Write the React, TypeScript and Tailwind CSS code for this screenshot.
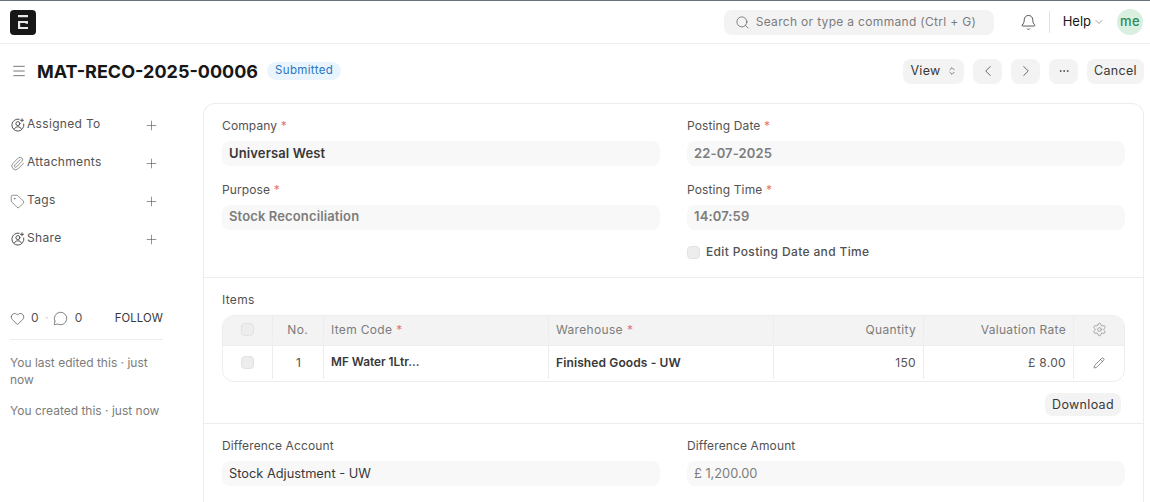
import { Bell, ChevronDown, ChevronLeft, ChevronRight, ChevronsUpDown, Ellipsis, Heart, MessageCircle, Paperclip, Pencil, Plus, Search, Settings, Tag, Menu } from "lucide-react";

function UserPlusIcon() {
  return (
    <svg width="14" height="14" viewBox="0 0 14 14" fill="none" stroke="#525252" strokeWidth="1" strokeLinecap="round" className="shrink-0">
      <path d="M8.2 1.2A6 6 0 1 0 12.8 6" />
      <circle cx="6.9" cy="5.6" r="2" />
      <path d="M3.4 11c.6-1.5 2-2.2 3.5-2.2s2.900.7 3.500 2.200" />
      <path d="M11 .8v3M9.500 2.300h3" />
    </svg>
  );
}

function Field({ label, value, required, bold, muted, tight }: { label: string; value: string; required?: boolean; bold?: boolean; muted?: boolean; tight?: boolean }) {
  return (
    <div className="flex flex-col">
      <div className="h-[15px] text-[12px] leading-[13px] tracking-[0.01em] text-[#525252]">
        {label} {required && <span className="text-[#e57373]">*</span>}
      </div>
      <div
        className={`mt-[7px] h-[25px] rounded-lg bg-[#f8f8f8] px-[7px] ${tight ? "leading-[22px]" : "leading-[24px]"} ${bold ? "text-[13px] font-semibold tracking-[0.01em]" : "text-[12.8px] leading-[25px] tracking-normal"} ${muted ? "text-[#7c7c7c]" : "text-[#383838]"}`}
      >
        {value}
      </div>
    </div>
  );
}

function SideItem({ icon, label }: { icon: React.ReactNode; label: string }) {
  return (
    <div className="flex h-[38px] items-center">
      <div className="flex w-[20px] justify-center pl-[2px] pr-[1px]">{icon}</div>
      <span className="-translate-y-px text-[12px] text-[#525252]">{label}</span>
      <Plus size={15} strokeWidth={1} color="#525252" className="ml-auto mr-[4px]" />
    </div>
  );
}

function Checkbox() {
  return <div className="h-[13px] w-[13px] rounded-[4px] border border-[#e2e2e2] bg-[#ededed]" />;
}

export default function App() {
  return (
    <div className="h-[502px] w-[1150px] overflow-hidden bg-white font-['Inter',sans-serif] tracking-[0.02em] text-[#383838]">
      <div className="flex h-[44px] items-center border-t border-b border-t-[#66757d] border-b-[#ededed] pl-[10px] pr-[7px]">
        <div className="flex h-[25px] w-[26px] items-center justify-center rounded-[4px] bg-[#171717]">
          <svg width="10" height="14" viewBox="0 0 10 14" fill="#e8e8e8">
            <path d="M0 0h10v2.200H0zM0 6h10v2.800H7.500V8H2.200v4H10v2H0z" />
          </svg>
        </div>
        <div className="ml-[688px] flex h-[25px] w-[270px] shrink-0 items-center rounded-lg bg-[#f3f3f3] pl-[11px] text-[12px] text-[#7c7c7c]">
          <Search size={15} strokeWidth={1.1} color="#525252" />
          <span className="ml-[6px]">Search or type a command (Ctrl + G)</span>
        </div>
        <Bell size={17} strokeWidth={1} color="#171717" className="ml-[26px] shrink-0" />
        <div className="ml-[12px] h-[22px] w-px bg-[#e2e2e2]" />
        <span className="ml-[13px] text-[13px] tracking-normal text-[#171717]">Help</span>
        <ChevronDown size={12} strokeWidth={1.1} color="#525252" className="ml-[2px] shrink-0" />
        <div className="ml-[12px] flex h-[26px] w-[26px] shrink-0 items-center justify-center rounded-full bg-[#d9efdf] text-[13px] font-medium text-[#2b8a57]">me</div>
      </div>

      <div className="flex h-[59px] items-center pb-[5px] pl-[11px] pr-[6px]">
        <Menu size={16} strokeWidth={1} color="#383838" />
        <h1 className="ml-[10px] text-[18px] font-bold tracking-normal text-[#171717]">MAT-RECO-2025-00006</h1>
        <span className="ml-[9px] flex h-[18px] w-[74px] items-center justify-center rounded-full bg-[#e9f4fd] text-[11.5px] tracking-[0.03em] text-[#2a75c4]">Submitted</span>
        <div className="ml-auto flex h-[25px] gap-[9px] text-[12.5px] text-[#383838]">
          <button className="flex w-[61px] items-center justify-center gap-[6px] rounded-lg bg-[#f3f3f3]">
            View <ChevronsUpDown size={10} strokeWidth={1.5} />
          </button>
          <button className="flex w-[29px] items-center justify-center rounded-lg bg-[#f3f3f3]">
            <ChevronLeft size={18} strokeWidth={1} />
          </button>
          <button className="flex w-[29px] items-center justify-center rounded-lg bg-[#f3f3f3]">
            <ChevronRight size={18} strokeWidth={1} />
          </button>
          <button className="flex w-[29px] items-center justify-center rounded-lg bg-[#f3f3f3]">
            <Ellipsis size={12} strokeWidth={1.5} />
          </button>
          <button className="w-[57px] rounded-lg bg-[#f3f3f3]">Cancel</button>
        </div>
      </div>

      <div className="flex items-start pl-[7px] pr-[6px]">
        <aside className="w-[156px] shrink-0">
          <div className="pt-[3px]">
            <SideItem icon={<UserPlusIcon />} label="Assigned To" />
            <SideItem icon={<Paperclip size={15} strokeWidth={1} color="#525252" />} label="Attachments" />
            <SideItem icon={<Tag size={15} strokeWidth={1} color="#525252" />} label="Tags" />
            <SideItem icon={<UserPlusIcon />} label="Share" />
          </div>
          <div className="mt-[49px] ml-[3px] flex h-[22px] items-center text-[12px] text-[#525252]">
            <Heart size={15} strokeWidth={1} color="#383838" />
            <span className="ml-[6px]">0</span>
            <span className="ml-[6px] text-[#c7c7c7]">·</span>
            <MessageCircle size={15} strokeWidth={1} color="#383838" className="ml-[4px]" />
            <span className="ml-[7px]">0</span>
            <span className="ml-auto text-[11.3px] tracking-[0.01em] text-[#383838]">FOLLOW</span>
          </div>
          <div className="ml-[3px] mt-[10px] border-t border-[#ededed] pt-[14px] text-[12px] leading-[17px] tracking-normal text-[#7c7c7c]">
            <p>You last edited this · just now</p>
            <p className="mt-[14px]">You created this · just now</p>
          </div>
        </aside>

        <main className="ml-[40px] h-[400px] flex-1 rounded-t-xl border-x border-t border-[#ededed]">
          <section className="grid h-[174px] grid-cols-[438px_438px] gap-x-[27px] border-b border-[#ededed] pl-[18px] pt-[15px]">
            <div className="flex flex-col gap-[17px]">
              <Field label="Company" value="Universal West" required bold />
              <Field label="Purpose" value="Stock Reconciliation" required bold muted tight />
            </div>
            <div className="flex flex-col gap-[17px]">
              <Field label="Posting Date" value="22-07-2025" required bold muted />
              <Field label="Posting Time" value="14:07:59" required bold muted tight />
              <div className="-mt-[4px] flex items-center gap-[6px] text-[12px] font-medium tracking-[0.03em] text-[#525252]">
                <Checkbox />
                <span>Edit Posting Date and Time</span>
              </div>
            </div>
          </section>

          <section className="h-[146px] border-b border-[#ededed] pl-[18px] pr-[18px] pt-[15px]">
            <div className="h-[15px] text-[12px] leading-[13px] text-[#525252]">Items</div>
            <div className="mt-[7px] overflow-hidden rounded-xl border border-[#ededed] text-[12px]">
              <div className="grid h-[29px] grid-cols-[50px_51px_225px_225px_150px_150px_1fr] items-stretch bg-[#f3f3f3] pb-[2px] text-[#7c7c7c]">
                <div className="flex items-center justify-center border-r border-[#ededed]"><Checkbox /></div>
                <div className="flex items-center justify-end border-r border-[#ededed] pr-[15px]">No.</div>
                <div className="flex items-center gap-1 border-r border-[#ededed] px-[7px]">Item Code <span className="text-[#e57373]">*</span></div>
                <div className="flex items-center gap-1 border-r border-[#ededed] px-[7px]">Warehouse <span className="text-[#e57373]">*</span></div>
                <div className="flex items-center justify-end border-r border-[#ededed] px-[7px]">Quantity</div>
                <div className="flex items-center justify-end border-r border-[#ededed] px-[7px]">Valuation Rate</div>
                <div className="flex items-center justify-center"><Settings size={15} strokeWidth={1} /></div>
              </div>
              <div className="grid h-[36px] grid-cols-[50px_51px_225px_225px_150px_150px_1fr] items-stretch border-t border-[#ededed] pb-[2px] text-[#525252]">
                <div className="flex items-center justify-center border-r border-[#ededed]"><Checkbox /></div>
                <div className="flex items-center justify-center border-r border-[#ededed] pl-[1px]">1</div>
                <div className="flex items-center border-r border-[#ededed] px-[7px] text-[11.8px] font-semibold tracking-normal text-[#383838]">MF Water 1Ltr...</div>
                <div className="flex items-center border-r border-[#ededed] px-[7px] font-semibold tracking-[0.01em] text-[#383838]">Finished Goods - UW</div>
                <div className="flex items-center justify-end border-r border-[#ededed] px-[7px]">150</div>
                <div className="flex items-center justify-end border-r border-[#ededed] px-[7px]">£ 8.00</div>
                <div className="flex items-center justify-center"><Pencil size={12} strokeWidth={1.1} color="#383838" /></div>
              </div>
            </div>
            <div className="mt-[11px] flex justify-end pr-[4px]">
              <button className="h-[23px] w-[76px] rounded-lg bg-[#f3f3f3] pt-px text-[12.5px] text-[#383838]">Download</button>
            </div>
          </section>

          <section className="grid grid-cols-[438px_438px] gap-x-[27px] pl-[18px] pt-[15px]">
            <Field label="Difference Account" value="Stock Adjustment - UW" />
            <Field label="Difference Amount" value="£ 1,200.00" muted />
          </section>
        </main>
      </div>
    </div>
  );
}
